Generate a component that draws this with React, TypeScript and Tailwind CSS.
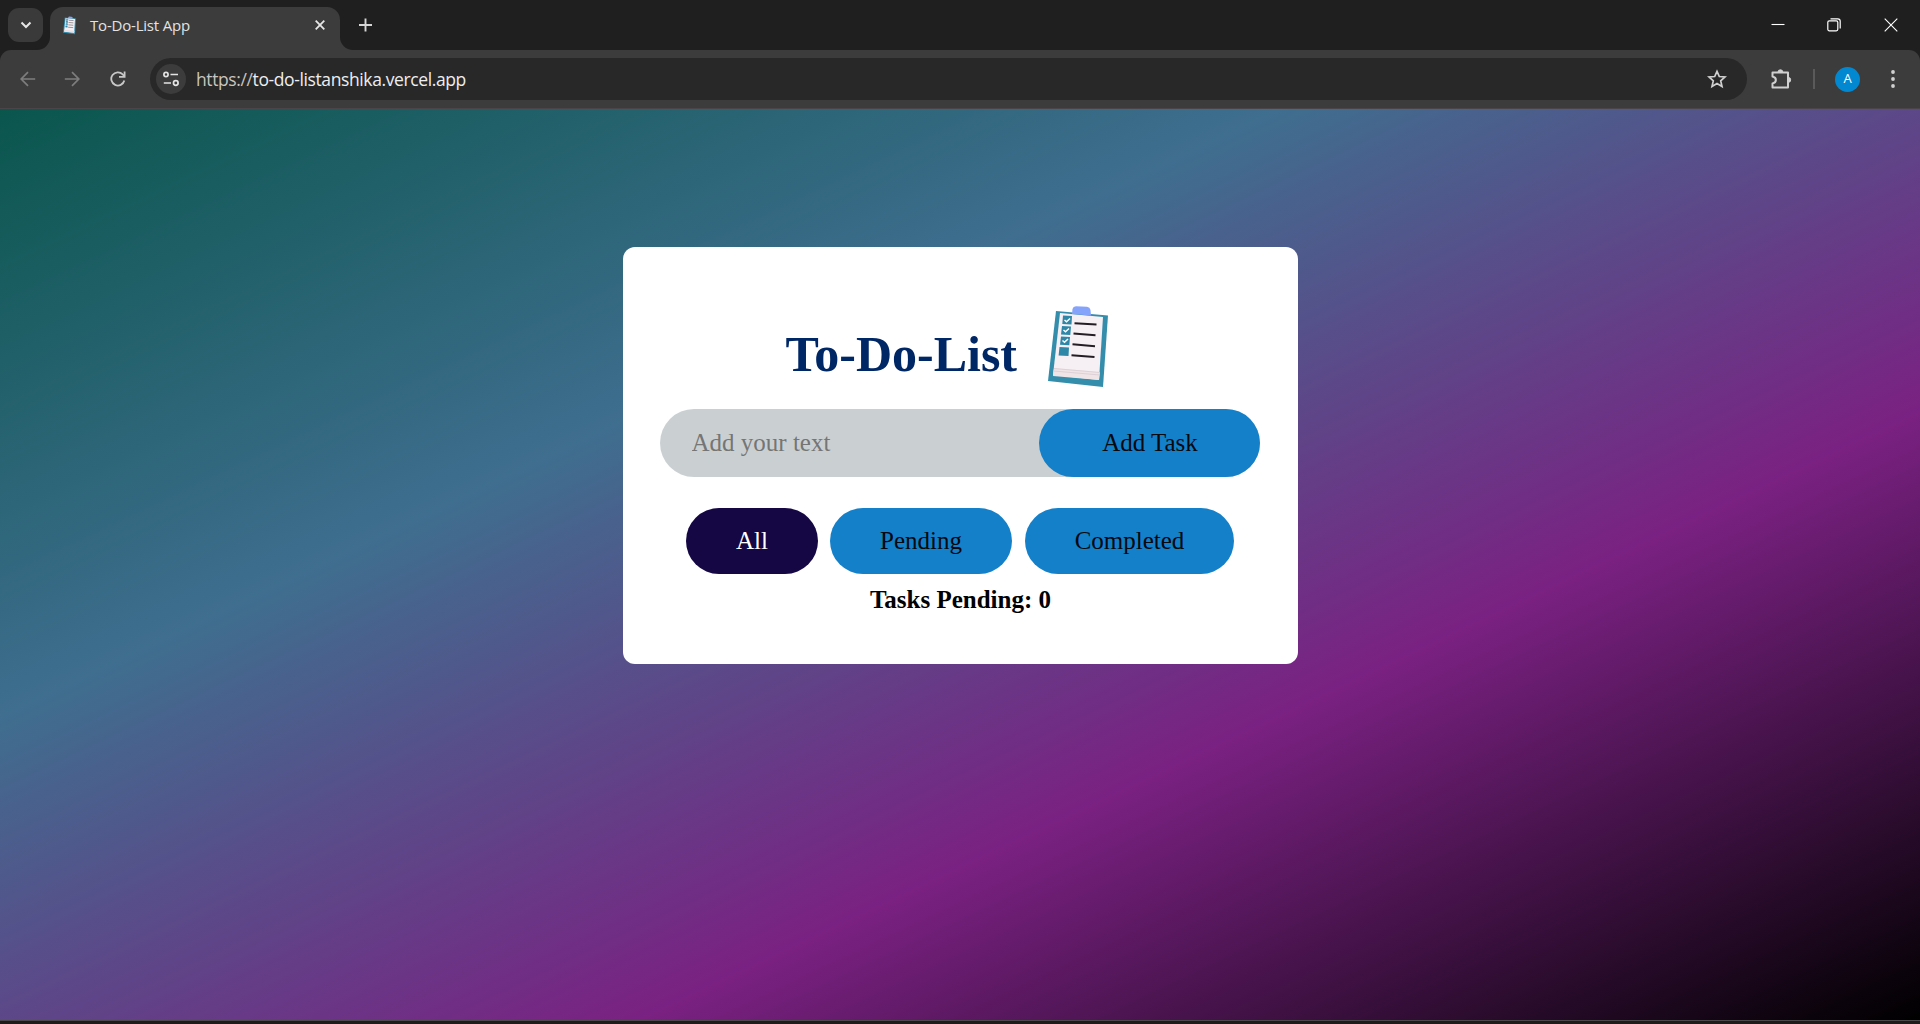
import React, { useState } from "react";

function Clipboard({ className }: { className: string }) {
  return (
    <svg viewBox="0 0 100 110" className={className}>
      <polygon points="26,21 78,25.500 73,97 18,91" fill="#358dac" />
      <polygon points="30,23 73,27 69,90 23,85" fill="#f6f0f4" />
      <path d="M24 78 L70 82 L69 90 L23 86Z" fill="#f1e4e7" />
      <path d="M24 78.500 L70 82.500 M23.500 81 L70 85" stroke="#d8cbd2" strokeWidth=".8" />
      <path d="M42 24 L42.500 19 Q43 16.500 46 16.300 L57 16.800 Q60 17.200 60.500 20 L61 25.500Z" fill="#86a3fb" />
      <path d="M44.500 33.300 L66.500 34.600 M43.500 43.500 L65.500 45.200 M42.500 54.300 L65 56.200 M41.500 65.300 L64.500 67" stroke="#241d24" strokeWidth="2" />
      <path d="M33 25.500 L42 26 L41.500 34.500 L32.300 34Z M32 36 L41 36.600 L40.300 45 L31 44.500Z M31 46.500 L40 47 L39.300 55.300 L30 54.800Z M29.500 57 L39 57.600 L38.500 66 L28.600 65.400Z" fill="#2f87a8" />
      <path d="M34.500 30 L36.500 31.700 L40 28.500 M33.500 40 L35.500 41.700 L39 38.500 M32.500 50.500 L34.500 52.300 L38 49" fill="none" stroke="#fff" strokeWidth="1.5" />
    </svg>
  );
}

function TabStrip() {
  return (
    <div className="flex h-[50px] bg-[#1f1f1f]">
      <div className="ml-2 mt-2 flex h-[34px] w-[35px] items-center justify-center rounded-[11px] bg-[#3a3a3a]">
        <svg viewBox="0 0 12 8" className="h-[8px] w-[12px]" fill="none" stroke="#e6e6e6" strokeWidth="2">
          <path d="M1.500 1.500 L6 6 L10.500 1.500" />
        </svg>
      </div>
      <div className="relative ml-[7px] mt-[7px] flex h-[43px] w-[290px] items-start rounded-t-[13px] bg-[#3c3c3c]">
        <svg viewBox="0 0 13 13" className="absolute -left-[13px] bottom-0 size-[13px]" fill="#3c3c3c">
          <path d="M13 0 V13 H0 A13 13 0 0 0 13 0Z" />
        </svg>
        <svg viewBox="0 0 13 13" className="absolute -right-[13px] bottom-0 size-[13px]" fill="#3c3c3c">
          <path d="M0 0 V13 H13 A13 13 0 0 1 0 0Z" />
        </svg>
        <Clipboard className="ml-[9px] mt-[6px] h-[24px] w-[22px]" />
        <span className="ml-[9px] mt-[7px] whitespace-nowrap text-[15px] leading-[22px] tracking-[-0.2px] text-[#e3e3e3]">
          To-Do-List App
        </span>
        <svg viewBox="0 0 10 10" className="ml-auto mr-[15px] mt-[13px] size-[10px]" stroke="#e6e6e6" strokeWidth="1.8">
          <path d="M.7 .7 L9.300 9.300 M9.300 .7 L.7 9.300" />
        </svg>
      </div>
      <svg viewBox="0 0 14 14" className="ml-[18px] mt-[18px] size-[14px]" stroke="#d6d6d6" strokeWidth="1.9">
        <path d="M7.500 .5 V13.500 M1 7 H14" />
      </svg>
      <div className="ml-auto mr-[22px] mt-[18px] flex h-[14px] items-center">
        <svg viewBox="0 0 14 14" className="size-[14px]" stroke="#fff" strokeWidth="1.1">
          <path d="M.5 6.500 H13.500" />
        </svg>
        <svg viewBox="0 0 14 14" className="ml-[42px] size-[14px]" fill="none" stroke="#fff" strokeWidth="1.2">
          <rect x=".8" y="2.800" width="10" height="10" rx="1.500" />
          <path d="M3.500 .8 H10.800 Q13.200 .8 13.200 3.200 V10.500" />
        </svg>
        <svg viewBox="0 0 14 14" className="ml-[43px] size-[14px]" stroke="#fff" strokeWidth="1.1">
          <path d="M.7 .7 L13.300 13.300 M13.300 .7 L.7 13.300" />
        </svg>
      </div>
    </div>
  );
}

function Toolbar() {
  return (
    <div className="bg-[#1f1f1f]">
      <div className="flex h-[58px] items-center rounded-t-[11px] bg-[#3c3c3c]">
        <svg viewBox="0 0 16 16" className="ml-[20px] size-[16px]" fill="none" stroke="#7d7d7d" strokeWidth="1.7">
          <path d="M15.200 8 H1.500 M8 1.200 L1.200 8 L8 14.800" />
        </svg>
        <svg viewBox="0 0 16 16" className="ml-[28px] size-[16px]" fill="none" stroke="#7d7d7d" strokeWidth="1.7">
          <path d="M.8 8 H14.500 M8 1.200 L14.800 8 L8 14.800" />
        </svg>
        <svg viewBox="0 0 16 16" className="ml-[30px] size-[16px]" fill="none" stroke="#c8c8c8" strokeWidth="1.8">
          <path d="M14.300 9.500 A6.600 6.600 0 1 1 12.700 3.400 L14.500 5.300" />
          <path d="M14.600 .5 V5.900 H9" />
        </svg>
        <div className="ml-[24px] flex h-[42px] w-[1597px] items-center rounded-full bg-[#282828]">
          <div className="ml-[6px] flex size-[30px] items-center justify-center rounded-full bg-[#3c3c3c]">
            <svg viewBox="0 0 16 16" className="size-[16px]" fill="none" stroke="#e3e3e3" strokeWidth="1.7">
              <circle cx="3" cy="3.500" r="2.100" />
              <path d="M7.500 3.500 H15 M.8 12 H8" />
              <circle cx="12.800" cy="12" r="2.300" />
            </svg>
          </div>
          <span className="ml-[10px] whitespace-nowrap text-[17.5px] leading-[24px] tracking-[-0.39px] text-[#eeeeee]">
            <span className="text-[#c9c5be]">https://</span>to-do-listanshika.vercel.app
          </span>
          <svg viewBox="0 0 20 20" className="ml-auto mr-[20px] size-[20px]" fill="none" stroke="#d0d0d0" strokeWidth="1.7">
            <path d="M10 2.300 L12.300 7.500 L18 8 L13.700 11.800 L15 17.400 L10 14.400 L5 17.400 L6.300 11.800 L2 8 L7.700 7.500Z" />
          </svg>
        </div>
        <svg viewBox="0 0 22 22" className="ml-[23px] size-[22px]">
          <path
            d="M2.500 4.500 H18 V19.500 H2.500 V15.500 C7 14.500 7 9.500 2.500 8.500Z"
            fill="none"
            stroke="#d0d0d0"
            strokeWidth="2"
            strokeLinejoin="round"
          />
          <path d="M8 4 A2.400 2.200 0 0 1 12.800 4Z M18.500 9.500 A2.200 2.400 0 0 1 18.500 14.300Z" fill="#d0d0d0" stroke="#d0d0d0" />
        </svg>
        <div className="ml-[21px] h-[20px] w-[2px] bg-[#5a5a5a]" />
        <div className="ml-[20px] flex size-[25px] items-center justify-center rounded-full bg-[#0288d1] text-[13px] text-white">
          A
        </div>
        <svg viewBox="0 0 4 18" className="ml-[30.5px] h-[18px] w-[4px]" fill="#d0d0d0">
          <circle cx="2" cy="2" r="1.900" />
          <circle cx="2" cy="9" r="1.900" />
          <circle cx="2" cy="16" r="1.900" />
        </svg>
      </div>
    </div>
  );
}

const filters = [
  { name: "All", width: "w-[132px]" },
  { name: "Pending", width: "w-[182px]" },
  { name: "Completed", width: "w-[209px] ml-px" },
];

function TodoCard() {
  const [active, setActive] = useState("All");
  return (
    <main className="mx-auto flex h-[417px] w-[675px] flex-col rounded-[12px] bg-white pl-[37px] pr-[38px] pt-[43px]">
      <h1 className="flex h-[119px] items-start pl-[126px] text-[50px] font-bold leading-[56px] text-[#002765]">
        <span className="mt-[36px] w-[244px]">To-Do-List</span>
        <Clipboard className="h-[110px] w-[100px]" />
      </h1>
      <div className="flex h-[68px] shrink-0 rounded-full bg-[#cad0d2]">
        <input
          className="min-w-0 flex-1 bg-transparent pl-[32px] text-[25px] outline-none placeholder:text-[#757575]"
          placeholder="Add your text"
        />
        <button className="w-[221px] rounded-full bg-[#1480c9] pl-[2px] text-[25px] text-[#04080f]">Add Task</button>
      </div>
      <div className="mt-[31px] flex h-[66px] shrink-0 justify-center gap-[12px]">
        {filters.map((f) => (
          <button
            key={f.name}
            onClick={() => setActive(f.name)}
            className={`${f.width} rounded-full pl-px text-[25px] ${
              active === f.name ? "bg-[#140744] text-white" : "bg-[#1480c9] text-[#04080f]"
            }`}
          >
            {f.name}
          </button>
        ))}
      </div>
      <p className="mt-[11px] pl-[2px] text-center text-[25px] font-bold leading-[29px] text-black">Tasks Pending: 0</p>
    </main>
  );
}

export default function App() {
  return (
    <div className="flex h-screen w-full flex-col overflow-hidden bg-[#1f1f1f]">
      <header className="shrink-0 font-['Open_Sans','Noto_Sans',sans-serif]">
        <TabStrip />
        <Toolbar />
      </header>
      <div className="flex-1 border-y border-t-[#4a4549] border-b-[#4a4a4a] bg-[linear-gradient(to_bottom_right,#0a564d,#3f6e8f,#7a2182,#000000)] pt-[138px] font-['Liberation_Serif',serif]">
        <TodoCard />
      </div>
      <div className="h-[3px] shrink-0 bg-[#1f1b1b]" />
    </div>
  );
}
